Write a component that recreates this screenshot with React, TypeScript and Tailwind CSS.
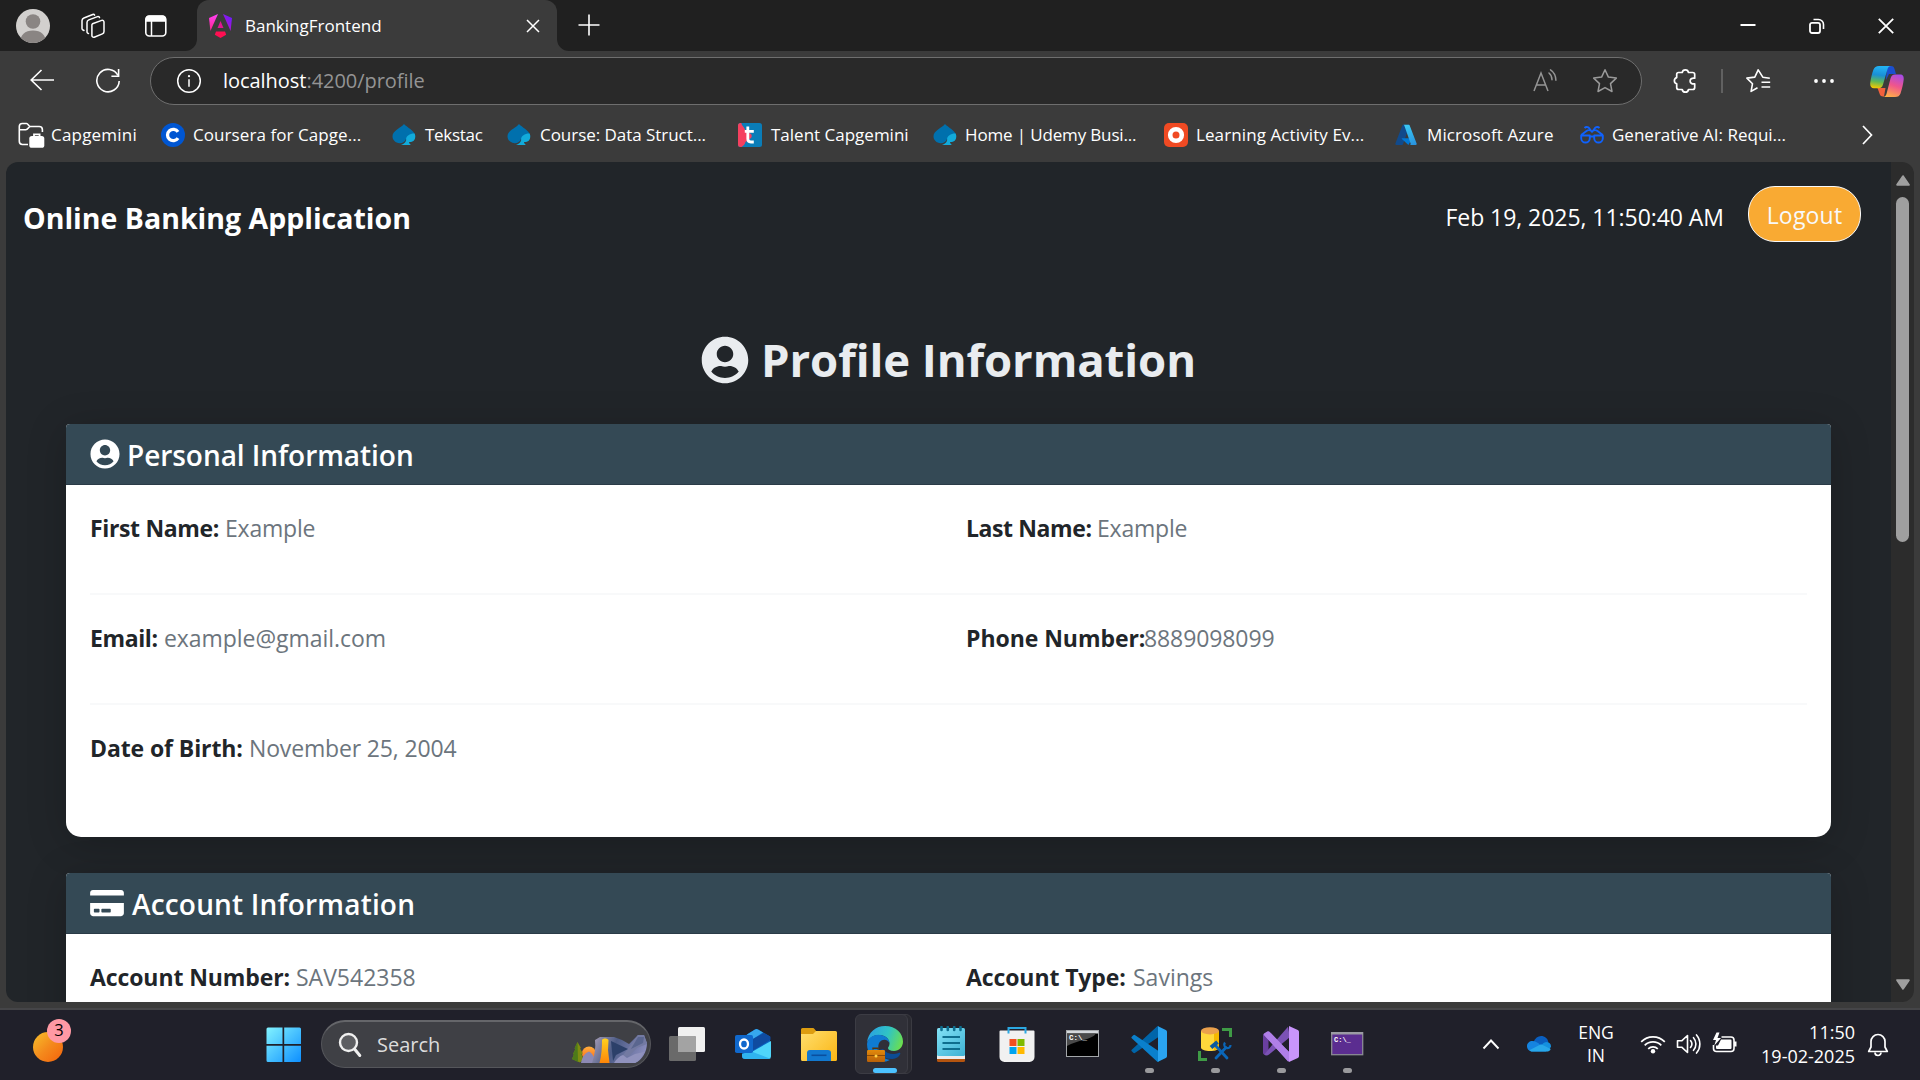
import React from 'react';
import { FaUserCircle, FaCreditCard } from 'react-icons/fa';

type IconProps = { w: number; h: number; className?: string; children: React.ReactNode };

function Icon({ w, h, className = '', children }: IconProps) {
  return (
    <svg width={w} height={h} viewBox={`0 0 ${w} ${h}`} fill="none" className={`block shrink-0 ${className}`}>
      {children}
    </svg>
  );
}

/* ---------- Tab strip ---------- */

function TabStrip() {
  return (
    <div className="flex h-[51px] shrink-0 items-center bg-[#202020]">
      <Icon w={34} h={34} className="ml-4">
        <clipPath id="avatar"><circle cx="17" cy="17" r="17" /></clipPath>
        <g clipPath="url(#avatar)">
          <rect width="34" height="34" fill="#d2d0ce" />
          <circle cx="17" cy="12.5" r="7.3" fill="#8a8583" />
          <path d="M4 34c0-8 5-12.500 13-12.500s13 4.500 13 12.500z" fill="#8a8583" />
        </g>
      </Icon>
      <Icon w={26} h={26} className="ml-[30px]">
        <g stroke="#fff" strokeWidth="1.5" strokeLinejoin="round" strokeLinecap="round">
          <path d="M12.500 10.800l9.200-3.400a1.700 1.700 0 0 1 2.300 1.600v9.500a2.600 2.600 0 0 1-1.600 2.400l-8.200 3.300a1.700 1.700 0 0 1-2.300-1.600V13a2.400 2.400 0 0 1 .6-2.200z" />
          <path d="M8.500 20.500l-.7-.3a1.500 1.500 0 0 1-.8-1.400V9.500a2.800 2.800 0 0 1 1.800-2.600l8.700-3.300a1.500 1.500 0 0 1 2 1" />
          <path d="M4 17.500l-1-.5a1.800 1.800 0 0 1-1-1.600V7.600A3 3 0 0 1 3.900 5l8.800-3.500a1.500 1.500 0 0 1 1.900.7" />
        </g>
      </Icon>
      <Icon w={24} h={24} className="ml-[38px]">
        <rect x="1.800" y="2" width="20" height="20" rx="3.500" stroke="#fff" strokeWidth="1.600" />
        <path d="M1.500 7.800V5a3.500 3.500 0 0 1 3.500-3.500h13.500A3.500 3.500 0 0 1 22 5v2.800z" fill="#fff" />
        <path d="M7.500 7v15" stroke="#fff" strokeWidth="1.500" />
      </Icon>
      <Icon w={12} h={51} className="ml-[17px]">
        <path d="M12 39v12H0a12 12 0 0 0 12-12z" fill="#3b3b3b" />
      </Icon>
      <div className="flex h-full w-[360px] items-center rounded-t-[12px] bg-[#3b3b3b]">
        <Icon w={23} h={24} className="ml-3">
          <defs>
            <linearGradient id="ngp" x1="0" y1="24" x2="23" y2="4" gradientUnits="userSpaceOnUse">
              <stop offset="0" stopColor="#f0060b" />
              <stop offset=".45" stopColor="#e10fb0" />
              <stop offset="1" stopColor="#6b1cff" />
            </linearGradient>
            <linearGradient id="ngl" x1="0" y1="0" x2="0" y2="24" gradientUnits="userSpaceOnUse">
              <stop offset="0" stopColor="#ff41f8" />
              <stop offset="1" stopColor="#ff1a5c" />
            </linearGradient>
          </defs>
          <path d="M9 0L0 4l1.400 13z" fill="url(#ngl)" />
          <path d="M14 0l9 4-1.400 13z" fill="url(#ngp)" />
          <path d="M11.500 7l3 7h-6z" fill="#e21592" />
          <path d="M7 17.500h9l1.200 3.200L11.500 24l-5.700-3.300z" fill="#ff0f52" />
        </Icon>
        <span className="ml-[13px] text-[17px] text-white">BankingFrontend</span>
        <Icon w={14} h={14} className="ml-auto mr-[17px]">
          <path d="M1 1l12 12M13 1L1 13" stroke="#fff" strokeWidth="1.500" />
        </Icon>
      </div>
      <Icon w={12} h={51}>
        <path d="M0 39v12h12A12 12 0 0 1 0 39z" fill="#3b3b3b" />
      </Icon>
      <Icon w={22} h={22} className="mb-[2px] ml-[9px]">
        <path d="M11 0.500v21M0.500 11h21" stroke="#fff" strokeWidth="1.600" />
      </Icon>
      <Icon w={16} h={16} className="mb-px ml-auto mr-[53px]">
        <path d="M.5 8h15" stroke="#fff" strokeWidth="2" />
      </Icon>
      <Icon w={16} h={16} className="mr-[53px]">
        <rect x="1" y="4.800" width="10" height="10.200" rx="2" stroke="#fff" strokeWidth="1.800" />
        <path d="M4.500 1.500h5a5 5 0 0 1 5 5v4.500" stroke="#fff" strokeWidth="1.600" />
      </Icon>
      <Icon w={16} h={16} className="mr-[26px]">
        <path d="M.8.8l14.400 14.400M15.200.8L.8 15.200" stroke="#fff" strokeWidth="1.800" />
      </Icon>
    </div>
  );
}

/* ---------- Address bar ---------- */

function AddressRow() {
  return (
    <div className="flex h-[60px] shrink-0 items-center">
      <Icon w={24} h={22} className="mb-[2px] ml-[30px]">
        <path d="M24 11H1.200M11.500 1L1.200 11l10.300 10" stroke="#fff" strokeWidth="1.600" />
      </Icon>
      <Icon w={26} h={26} className="ml-[41px]">
        <path d="M23 7.500A11.200 11.200 0 1 0 24.200 13" stroke="#fff" strokeWidth="1.600" />
        <path d="M23.600 1v7.200h-7.200" stroke="#fff" strokeWidth="1.600" />
      </Icon>
      <div className="ml-[29px] flex h-[48px] w-[1492px] items-center rounded-full border border-[#6e6e6e] bg-[#292929]">
        <Icon w={26} h={26} className="ml-[25px]">
          <circle cx="13" cy="13" r="11.300" stroke="#fff" strokeWidth="1.500" />
          <path d="M13 11.300v7.500" stroke="#fff" strokeWidth="1.500" />
          <circle cx="13" cy="8.200" r="1.100" fill="#fff" />
        </Icon>
        <span className="ml-[21px] text-[20px] tracking-[-0.04px] text-white">
          localhost<span className="text-[#949494]">:4200/profile</span>
        </span>
        <Icon w={26} h={24} className="mb-px ml-auto mr-[33px]">
          <path d="M1 22L8 4l7 18M3.300 16h9.400" stroke="#959595" strokeWidth="1.500" />
          <path d="M14.500 4c2 1.600 3 3.800 3 6.800M16 .8c3.300 2.200 5.300 5.600 5.400 10.500" stroke="#959595" strokeWidth="1.500" strokeLinecap="round" transform="translate(1.500 0)" />
        </Icon>
        <Icon w={26} h={26} className="mr-[23px]">
          <path d="M13 1.800l3.400 7.300 7.900 1-5.800 5.500 1.500 7.900L13 19.600l-7 3.900 1.500-7.900L1.700 10.100l7.900-1z" stroke="#9a9a9a" strokeWidth="1.500" strokeLinejoin="round" />
        </Icon>
      </div>
      <Icon w={24} h={26} className="ml-[31px]">
        <path d="M5.500 4.500h3.700a3.200 3.200 0 0 1 6.300 0h4.200a2 2 0 0 1 2 2v3.700c-3.200-.4-4.600 1.100-4.600 2.800s1.400 3.200 4.600 2.800v3.700a2 2 0 0 1-2 2h-4.200a3.200 3.200 0 0 1-6.300 0H5.700a2 2 0 0 1-2-2v-3.600a3.300 3.300 0 0 1 0-6.300V6.300a1.800 1.800 0 0 1 1.800-1.800z" stroke="#fff" strokeWidth="1.700" strokeLinejoin="round" />
      </Icon>
      <div className="ml-[24px] h-[24px] w-[2px] bg-[#616161]" />
      <Icon w={26} h={26} className="ml-[22px]">
        <path d="M24.800 10.200l-7-1L13.200 1.800 9.800 9.100l-7.900 1 5.600 5.600-1.400 7.700 6.400-3.600" stroke="#fff" strokeWidth="1.600" strokeLinejoin="round" />
        <path d="M16.500 14.200h8.700M16.500 19h8.700" stroke="#fff" strokeWidth="1.600" />
      </Icon>
      <Icon w={22} h={6} className="ml-[42px]">
        <circle cx="3" cy="3" r="1.900" fill="#fff" />
        <circle cx="11" cy="3" r="1.900" fill="#fff" />
        <circle cx="19" cy="3" r="1.900" fill="#fff" />
      </Icon>
      <Icon w={34} h={31} className="ml-[35px]">
        <defs>
          <linearGradient id="cp1" x1="8" y1="0" x2="5" y2="22" gradientUnits="userSpaceOnUse">
            <stop offset="0" stopColor="#23b4f5" />
            <stop offset=".4" stopColor="#1a8fd6" />
            <stop offset=".7" stopColor="#5fb858" />
            <stop offset="1" stopColor="#f5c800" />
          </linearGradient>
          <linearGradient id="cp2" x1="28" y1="8" x2="20" y2="31" gradientUnits="userSpaceOnUse">
            <stop offset="0" stopColor="#a64be8" />
            <stop offset=".5" stopColor="#f0558c" />
            <stop offset="1" stopColor="#ffae48" />
          </linearGradient>
        </defs>
        <path d="M17 0h4c2.200 0 3 1.200 3.600 3.200L26 8h-7l-3 6z" fill="#1b4fd0" />
        <path d="M7.500 22h8l-1.500 8.500h-1c-2 0-3-1.200-3.500-3z" fill="#f2603c" />
        <path d="M9 0h12c-2 0-3 1.400-3.600 3.400L13 18.500c-.8 2.600-2 3.700-4.300 3.700H4C1 22.200-.2 20 .3 16.500 1 11.500 2 7.500 3.500 3.500 4.500 1.200 6 0 9 0z" fill="url(#cp1)" />
        <path d="M25 31H13c2 0 3-1.400 3.600-3.400L20.500 12.500c.8-2.900 2-4 4.500-4h5c3 0 4 2 3.700 5-.5 4.500-1.700 9.500-3.200 14C29.500 30 28 31 25 31z" fill="url(#cp2)" />
      </Icon>
    </div>
  );
}

/* ---------- Bookmarks ---------- */

function SpadeIcon() {
  return (
    <Icon w={24} h={24}>
      <path d="M12 1c2.500 3 10.500 6.500 11.200 11.500.4 4-3.200 5.500-6.200 4.500l-3-1c-.8 2.700-3.300 4.300-6.300 4.200C3.500 20 .5 17 .5 13.200.5 7.500 9 5 12 1z" fill="#0070ad" />
      <path d="M22.600 10.500c1.800 4.500-.2 8.800-5.600 8.600.2 1.300 1 2.300 2 3H9c2.300-.7 4.500-2 5.200-5-.8-3.700 3.300-6.800 8.400-6.600z" fill="#12abdb" />
    </Icon>
  );
}

function FolderIcon() {
  return (
    <Icon w={27} h={27}>
      <path d="M10 22.500H4.500A3.200 3.200 0 0 1 1.300 19.300V4.500a3 3 0 0 1 3-3h4.200c1.600 0 2.200 3 3.800 3h8.900a3.200 3.200 0 0 1 3.200 3.200V10M1.300 7.800h6.500c2.400 0 2.600-3.300 4.700-3.300" stroke="#fff" strokeWidth="1.600" strokeLinejoin="round" />
      <rect x="11.300" y="14" width="15" height="11.800" rx="2.600" fill="#fff" />
      <path d="M16 14.500v-2.200h5.600v2.200" stroke="#fff" strokeWidth="1.800" />
    </Icon>
  );
}

function CourseraIcon() {
  return (
    <Icon w={24} h={24}>
      <circle cx="12" cy="12" r="12" fill="#0056d2" />
      <path d="M17 8.900a5.700 5.700 0 1 0 0 6.200" stroke="#fff" strokeWidth="3.300" />
    </Icon>
  );
}

function TalentIcon() {
  return (
    <Icon w={24} h={24}>
      <rect width="24" height="24" rx="2.500" fill="#0a7db8" />
      <path d="M2.500 0h.8c.9 3.500 3.300 4.200 4 7.500L13 11c1 1 1 3 0 4l-5.500 4c-.8 2.600-2 3.600-4 5h-1A2.500 2.500 0 0 1 0 21.500v-19A2.500 2.500 0 0 1 2.500 0z" fill="#f5405f" />
      <path d="M9.800 3.500v12.300c0 2.300 1.200 3.200 3 3.200h3M6.800 8.300h9" stroke="#fff" strokeWidth="2.800" />
    </Icon>
  );
}

function LearningIcon() {
  return (
    <Icon w={24} h={24}>
      <rect width="24" height="24" rx="5" fill="#f04a23" />
      <circle cx="12" cy="12" r="5.800" stroke="#fff" strokeWidth="4.600" />
      <path d="M12 9.300v5.400M9.300 12h5.400" stroke="#f04a23" strokeWidth="2" />
    </Icon>
  );
}

function AzureIcon() {
  return (
    <Icon w={24} h={24}>
      <defs>
        <linearGradient id="az" x1="10" y1="2" x2="20" y2="22" gradientUnits="userSpaceOnUse">
          <stop offset="0" stopColor="#3ccbf4" />
          <stop offset="1" stopColor="#2892df" />
        </linearGradient>
      </defs>
      <path d="M8.300 1.800h6.400L8 21.300a1.200 1.200 0 0 1-1 .7H1.400c-.8 0-1.300-.6-1-1.400L7.300 2.500a1 1 0 0 1 1-.7z" fill="#114a8b" />
      <path d="M17.300 15.200H7.200c-.5 0-.7.5-.3.8l6.500 6z" fill="#0078d4" />
      <path d="M14.700 2.500a1 1 0 0 0-1-.7H8.300a1 1 0 0 1 1 .7l6.400 18.300c.2.600-.2 1.200-1 1.200h6c.8 0 1.200-.6 1-1.200z" fill="url(#az)" />
    </Icon>
  );
}

function GlassesIcon() {
  return (
    <Icon w={24} h={24}>
      <g stroke="#0f62fe" strokeWidth="1.900" strokeLinejoin="round">
        <path d="M1.200 12.500h8.600v2.700a4.300 4.300 0 0 1-8.600 0zM14.200 12.500h8.600v2.700a4.300 4.300 0 0 1-8.600 0zM9.800 13.500h4.400M1.200 12l5.300-4c2-1.500 4-.8 5.500.6 1.500-1.400 3.500-2.100 5.500-.6l5.300 4M4.500 5c1.500-1.500 3-1.200 4-.4s1.800 2.600 3.500 4.200c1.700-1.600 2.500-3.400 3.500-4.200s2.500-1.100 4 .4" />
      </g>
    </Icon>
  );
}

const bookmarks = [
  { label: 'Capgemini', width: 'w-[143px]', icon: <FolderIcon />, text: 'ml-[6px] tracking-[0.2px]' },
  { label: 'Coursera for Capge...', width: 'w-[231px]', icon: <CourseraIcon />, text: 'ml-2 tracking-[0.07px]' },
  { label: 'Tekstac', width: 'w-[115px]', icon: <SpadeIcon />, text: 'ml-[9px] tracking-[-0.3px]' },
  { label: 'Course: Data Struct...', width: 'w-[231px]', icon: <SpadeIcon />, text: 'ml-[9px] tracking-[-0.04px]' },
  { label: 'Talent Capgemini', width: 'w-[195px]', icon: <TalentIcon />, text: 'ml-[9px]' },
  { label: 'Home | Udemy Busi...', width: 'w-[231px]', icon: <SpadeIcon />, text: 'ml-2 tracking-[-0.15px]' },
  { label: 'Learning Activity Ev...', width: 'w-[231px]', icon: <LearningIcon />, text: 'ml-2 tracking-[0.1px]' },
  { label: 'Microsoft Azure', width: 'w-[185px]', icon: <AzureIcon />, text: 'ml-2 tracking-[0.1px]' },
  { label: 'Generative AI: Requi...', width: 'w-[240px]', icon: <GlassesIcon />, text: 'ml-2' },
];

function BookmarksRow() {
  return (
    <div className="flex h-[51px] shrink-0 items-center pb-[3px] pl-[18px]">
      {bookmarks.map((b) => (
        <div key={b.label} className={`flex shrink-0 items-center ${b.width}`}>
          {b.icon}
          <span className={`whitespace-nowrap text-[17px] leading-6 text-white ${b.text}`}>{b.label}</span>
        </div>
      ))}
      <Icon w={12} h={20} className="ml-auto mr-[47px]">
        <path d="M2 1l8.500 9L2 19" stroke="#fff" strokeWidth="1.700" />
      </Icon>
    </div>
  );
}

/* ---------- Banking page ---------- */

type FieldProps = { label: string; value: string; labelClass: string; valueClass?: string };

function Field({ label, value, labelClass, valueClass = '' }: FieldProps) {
  return (
    <div className="flex text-[23px] leading-9">
      <span className={`shrink-0 whitespace-nowrap font-bold text-[#212529] ${labelClass}`}>{label}</span>
      <span className={`whitespace-nowrap text-[#6c757d] ${valueClass}`}>{value}</span>
    </div>
  );
}

function FieldRow({ children, divider = true }: { children: React.ReactNode; divider?: boolean }) {
  return (
    <div className={`grid h-[110px] grid-cols-[876px_1fr] pt-[25px] ${divider ? 'border-b-2 border-[#f8f9fa]' : ''}`}>
      {children}
    </div>
  );
}

type CardProps = { icon: React.ReactNode; title: string; titleClass: string; className: string; children: React.ReactNode };

function Card({ icon, title, titleClass, className, children }: CardProps) {
  return (
    <section className={`w-[1765px] rounded-t-[4px] rounded-b-[15px] bg-white shadow-[0_6px_40px_rgba(0,0,0,0.2)] ${className}`}>
      <h2 className="flex h-[61px] items-center rounded-t-[4px] border-b border-[#2a3b47] bg-[#344955] px-6 text-[28px] font-semibold text-white">
        {icon}
        <span className={`mt-[2px] leading-9 ${titleClass}`}>{title}</span>
      </h2>
      <div className="px-6">{children}</div>
    </section>
  );
}

function BankingPage() {
  return (
    <div className="h-full w-[1885px] overflow-hidden bg-[#212529]">
      <header className="flex h-[108px] pl-[17px] pr-[30px]">
        <h1 className="mt-[36px] text-[28.500px] font-bold leading-[40px] text-white">Online Banking Application</h1>
        <span className="ml-auto mt-[37px] text-[23px] leading-9 tracking-[-0.05px] text-white">Feb 19, 2025, 11:50:40 AM</span>
        <button className="ml-[24px] mt-6 h-[56px] w-[113px] rounded-[27px] border border-[#f8f9fa] bg-[#f9aa33] pt-[2px] text-[23px] leading-9 tracking-[0.2px] text-[#f8f9fa]">
          Logout
        </button>
      </header>
      <div className="flex flex-col items-start pl-[60px]">
        <div className="flex w-[1765px] items-center justify-center pt-[60px] text-[#e9ecef]">
          <FaUserCircle className="size-[48px] shrink-0" />
          <span className="-mt-px ml-[12px] mb-px text-[45.500px] font-bold leading-[60px] tracking-[-0.1px]">Profile Information</span>
        </div>
        <Card
          className="mt-[34px]"
          title="Personal Information"
          titleClass="ml-[7px] tracking-[-0.05px]"
          icon={<FaUserCircle className="size-[30px]" />}
        >
          <FieldRow>
            <Field label="First Name:" value="Example" labelClass="w-[135px] tracking-[-0.35px]" valueClass="tracking-[-0.2px]" />
            <Field label="Last Name:" value="Example" labelClass="w-[131px] tracking-[-0.4px]" valueClass="tracking-[-0.2px]" />
          </FieldRow>
          <FieldRow>
            <Field label="Email:" value="example@gmail.com" labelClass="w-[74px] tracking-[-0.4px]" valueClass="tracking-[-0.05px]" />
            <Field label="Phone Number:" value="8889098099" labelClass="w-[178px] tracking-[-0.05px]" valueClass="tracking-[-0.1px]" />
          </FieldRow>
          <FieldRow divider={false}>
            <Field label="Date of Birth:" value="November 25, 2004" labelClass="w-[159px] tracking-[-0.1px]" valueClass="tracking-[-0.15px]" />
          </FieldRow>
          <div className="h-[22px]" />
        </Card>
        <Card
          className="mt-[36px]"
          title="Account Information"
          titleClass="ml-[8px] tracking-[0.18px]"
          icon={<FaCreditCard className="h-[30px] w-[34px]" />}
        >
          <FieldRow>
            <Field label="Account Number:" value="SAV542358" labelClass="w-[206px] tracking-[-0.1px]" />
            <Field label="Account Type:" value="Savings" labelClass="w-[167px] tracking-[-0.1px]" />
          </FieldRow>
        </Card>
      </div>
    </div>
  );
}

function Scrollbar() {
  return (
    <div className="flex h-full w-[23px] flex-col items-center bg-[#2c2c2c]">
      <Icon w={14} h={11} className="mt-[13px]">
        <path d="M7 1.200L12.800 9.800H1.200z" fill="#9f9f9f" stroke="#9f9f9f" strokeWidth="2" strokeLinejoin="round" />
      </Icon>
      <div className="mt-[11px] h-[345px] w-[13px] rounded-full bg-[#9f9f9f]" />
      <Icon w={14} h={11} className="mb-[12px] mt-auto">
        <path d="M7 9.800L1.200 1.200h11.600z" fill="#9f9f9f" stroke="#9f9f9f" strokeWidth="2" strokeLinejoin="round" />
      </Icon>
    </div>
  );
}

/* ---------- Taskbar ---------- */

function TaskViewIcon() {
  return (
    <Icon w={36} h={36}>
      <rect x="9" y="1" width="27" height="25" rx="1.500" fill="#f0f0f0" />
      <rect x="0" y="10" width="27" height="25" rx="1.500" fill="#6a6a6a" />
      <path d="M9 10h16.500A1.500 1.500 0 0 1 27 11.500V26H9z" fill="#a3a3a3" />
    </Icon>
  );
}

function OutlookIcon() {
  return (
    <Icon w={36} h={36}>
      <path d="M8 11L20 3.500a3 3 0 0 1 3 0L35 10.500V30a3 3 0 0 1-3 3H10a3 3 0 0 1-3-3z" fill="#0a63c2" />
      <path d="M12 8.500L20 3.500a3 3 0 0 1 3 0l5 3L12 17z" fill="#36a8ee" />
      <path d="M14 15l15-8 6.500 3.700v3L17 25z" fill="#0f4ba0" />
      <path d="M36 15L14 27.500V30a3 3 0 0 0 3 3h16a3 3 0 0 0 3-3z" fill="#4fd5fa" />
      <path d="M7 28l8-3 21 8H10a3 3 0 0 1-3-3z" fill="#2fb4f0" />
      <rect x="0" y="9" width="18" height="18" rx="1.800" fill="#1068cc" />
      <ellipse cx="9" cy="18" rx="4" ry="4.500" stroke="#fff" strokeWidth="2.300" />
    </Icon>
  );
}

function ExplorerIcon() {
  return (
    <Icon w={36} h={36}>
      <defs>
        <linearGradient id="fold" x1="0" y1="5" x2="30" y2="35" gradientUnits="userSpaceOnUse">
          <stop offset="0" stopColor="#ffdf6e" />
          <stop offset="1" stopColor="#fbb91c" />
        </linearGradient>
      </defs>
      <path d="M0 3.500A1.500 1.500 0 0 1 1.500 2h10c1 0 1.600.4 2.200 1.200L15.500 5.500V12H0z" fill="#dd9d10" />
      <path d="M0 8h12l3-3h19.500A1.500 1.500 0 0 1 36 6.500V33.500A1.500 1.500 0 0 1 34.500 35h-33A1.500 1.500 0 0 1 0 33.500z" fill="url(#fold)" />
      <path d="M6 27a3 3 0 0 1 3-3h18a3 3 0 0 1 3 3v8H6z" fill="#1278cf" />
      <path d="M10.500 29.300h15" stroke="#0a4f9e" strokeWidth="1.600" />
    </Icon>
  );
}

function EdgeIcon() {
  return (
    <Icon w={36} h={36}>
      <defs>
        <linearGradient id="edgeTop" x1="2" y1="8" x2="35" y2="20" gradientUnits="userSpaceOnUse">
          <stop offset="0" stopColor="#2aa3e0" />
          <stop offset=".5" stopColor="#30c4c4" />
          <stop offset="1" stopColor="#6ee04a" />
        </linearGradient>
        <linearGradient id="case" x1="0" y1="24" x2="0" y2="36" gradientUnits="userSpaceOnUse">
          <stop offset="0" stopColor="#e28a0c" />
          <stop offset="1" stopColor="#b86008" />
        </linearGradient>
      </defs>
      <path d="M0 17C1 6 9 0 18 0c11 0 18 7.500 18 15.500C36 21 32 25 27 25c-4 0-6-1.400-6-3 0-1 1.500-1.700 1.500-4.500C22.500 13 18 9 12.500 9 6 9 1.500 12.500 0 17z" fill="url(#edgeTop)" />
      <path d="M0 18c.8-5.500 5.500-9.200 11.500-9.200 6 0 11 3.700 11 8.700-.7-2-2.700-3.700-5.200-3.700-3.500 0-6 3-6 7.200 0 6.500 4 11.500 11.500 13-1.500.8-3.200 1.500-5 1.500C8 36 0 28.500 0 18z" fill="#0f7bd2" />
      <path d="M12.500 24c1 6 6 9 12 9 3.200 0 6.500-1 8.500-4.500 1-1.500-.3-2-1.500-1.500-5.500 2.200-12.500.5-15.500-4z" fill="#0c4c94" />
      <path d="M6 23.500v-1.300h5v1.300" stroke="#5a3306" strokeWidth="1.400" />
      <rect x="0" y="24" width="18" height="12" rx="1.200" fill="url(#case)" />
      <path d="M0 29.500h18" stroke="#8a4a05" strokeWidth="1" />
      <circle cx="9" cy="30" r="1.500" fill="#ffd24a" />
    </Icon>
  );
}

function NotepadIcon() {
  return (
    <Icon w={36} h={36}>
      <defs>
        <linearGradient id="note" x1="4" y1="2" x2="30" y2="32" gradientUnits="userSpaceOnUse">
          <stop offset="0" stopColor="#83e2f6" />
          <stop offset="1" stopColor="#3db1d3" />
        </linearGradient>
      </defs>
      <rect x="4" y="28" width="28" height="8" rx="1.500" fill="#b4540f" />
      <rect x="4" y="26" width="28" height="7" fill="#ececec" />
      <rect x="4" y="2" width="28" height="28" rx="1.500" fill="url(#note)" />
      <path d="M9.500 11h17.500M9.500 17h17.500M9.500 23h17.500" stroke="#0e6e8e" strokeWidth="1.800" />
      <path d="M8.500 1v3M14.800 1v3M21.200 1v3M27.500 1v3" stroke="#0e6e8e" strokeWidth="2.600" strokeLinecap="round" />
    </Icon>
  );
}

function StoreIcon() {
  return (
    <Icon w={36} h={36}>
      <path d="M0.500 5.500A1 1 0 0 1 1.500 4.500h33A1 1 0 0 1 35.500 5.500V31a5 5 0 0 1-5 5h-25a5 5 0 0 1-5-5z" fill="#f1f1f1" />
      <path d="M9.500 7.500V2h17v5.500" stroke="#2ba8e2" strokeWidth="2" />
      <rect x="10.500" y="13" width="7" height="7" fill="#f25022" />
      <rect x="18.500" y="13" width="7" height="7" fill="#7fba00" />
      <rect x="10.500" y="21" width="7" height="7" fill="#00a4ef" />
      <rect x="18.500" y="21" width="7" height="7" fill="#ffb900" />
    </Icon>
  );
}

function CmdIcon() {
  return (
    <Icon w={36} h={36}>
      <rect x="1.500" y="4.500" width="32" height="26" fill="#000" stroke="#a4a7aa" />
      <path d="M2 5h31v2.500H2z" fill="#d5d8dc" />
      <path d="M2 7.500h29C27 14 12 14 2 20z" fill="#4a4a4a" />
      <text x="4" y="14" fill="#fff" fontSize="7.500" fontFamily="'Liberation Mono', monospace" fontWeight="700">C:\_</text>
    </Icon>
  );
}

function VsCodeIcon() {
  return (
    <Icon w={36} h={36}>
      <path d="M1 23.500L26 .6c.6-.5 1-.6 1.500-.4V11L4.200 26.800a1.500 1.500 0 0 1-1.900-.1L.8 25.300a1.200 1.200 0 0 1 .2-1.800z" fill="#0065a9" />
      <path d="M1 12.500L26 35.400c.6.500 1 .6 1.500.4V25L4.200 9.200a1.500 1.500 0 0 0-1.900.1L.8 10.700a1.200 1.200 0 0 0 .2 1.800z" fill="#0a80cc" />
      <path d="M27 .3L34.800 4A2 2 0 0 1 36 5.800V30.200a2 2 0 0 1-1.200 1.800L27 35.700z" fill="#2aa4f0" />
    </Icon>
  );
}

function SsmsIcon() {
  return (
    <Icon w={36} h={36}>
      <path d="M4 5v16.500C4 23.500 8 25 13 25s9-1.500 9-3.500V5z" fill="#ffd83b" />
      <path d="M17 5v19.600c3-.5 5-1.600 5-3.100V5z" fill="#f5b800" />
      <ellipse cx="13" cy="4.800" rx="9" ry="3.600" fill="#eaa04c" />
      <path d="M25 3.500h8.500V11M10 33.500H2.500V25" stroke="#3f9b46" strokeWidth="3" />
      <path d="M19 32l10-10.500" stroke="#0a66b8" strokeWidth="2.800" strokeLinecap="round" />
      <path d="M28 16.500c-1.500 2-.5 5 1.500 5.500s4-.5 4-3" stroke="#0a66b8" strokeWidth="2.200" />
      <path d="M18.500 19.500L30 32" stroke="#0a66b8" strokeWidth="2.800" strokeLinecap="round" />
      <path d="M14 21.500l6.500-5.500" stroke="#0a5a9e" strokeWidth="4" />
    </Icon>
  );
}

function VisualStudioIcon() {
  return (
    <Icon w={36} h={36}>
      <path d="M0 8l5.500 5v11L1.300 28.500A1.500 1.500 0 0 1 0 27z" fill="#6a3fa0" />
      <path d="M1 28.500L25 .8 27 11 6 28.500c-1.500 1.200-3.500 1.200-5 0z" fill="#7b52b5" />
      <path d="M1 7.500L4.200 5.500a2 2 0 0 1 2.400.2L27 27l-2 8.500L1.500 9.500a1.300 1.300 0 0 1-.5-2z" fill="#b07fe8" />
      <path d="M26 0l8.800 4A2 2 0 0 1 36 5.800V30.200a2 2 0 0 1-1.200 1.800L26 36z" fill="#c995fb" />
      <path d="M5 5.500L26 26v10L1 9z" fill="#b07fe8" />
    </Icon>
  );
}

function TerminalIcon() {
  return (
    <Icon w={36} h={36}>
      <rect x="2.700" y="6.700" width="31" height="22" fill="#5b2d90" stroke="#8b8b93" strokeWidth="1.300" />
      <path d="M2 6h32v2.500H2z" fill="#9b9ba3" />
      <text x="5" y="16" fill="#fff" fontSize="7" fontFamily="'Liberation Mono', monospace" fontWeight="700">C:\_</text>
    </Icon>
  );
}

function Landscape() {
  return (
    <Icon w={76} h={30}>
      <defs>
        <linearGradient id="sun" x1="0" y1="12" x2="0" y2="26" gradientUnits="userSpaceOnUse">
          <stop offset="0" stopColor="#ffb13d" />
          <stop offset="1" stopColor="#ff6a1a" />
        </linearGradient>
        <linearGradient id="fall" x1="0" y1="4" x2="0" y2="29" gradientUnits="userSpaceOnUse">
          <stop offset="0" stopColor="#ffd21f" />
          <stop offset="1" stopColor="#ff8608" />
        </linearGradient>
        <linearGradient id="rock" x1="22" y1="4" x2="70" y2="28" gradientUnits="userSpaceOnUse">
          <stop offset="0" stopColor="#a39bb5" />
          <stop offset=".4" stopColor="#4d5c86" />
          <stop offset="1" stopColor="#8d8fc0" />
        </linearGradient>
      </defs>
      <circle cx="17" cy="19.500" r="7" fill="url(#sun)" />
      <path d="M5.500 8L9 14l-1 .5 3 5-1.500.5 2 5.500L8 28.500 0 25l2-4.500-1-.5 2.500-5-1-.5z" fill="#7e8c12" />
      <path d="M5.500 8L6 28 0 25l2-4.500-1-.5 2.500-5-1-.5z" fill="#4d7a1a" />
      <path d="M9 29c1-6 4-10 8-11.500 2 1 6 5 7 11.500z" fill="#8d8ab4" />
      <path d="M20 29c2.500-8 4-15 3-23l5-3h14l8 3 7 4L66 1h6l3 8c0 9-5 17-12 20z" fill="url(#rock)" />
      <path d="M57 13L66 1l6 0 3 9-10 4-8 8-8 2z" fill="#737aa2" />
      <path d="M66 3l-7 12 12-6 1-6z" fill="#5a668f" />
      <path d="M42 29c2-4 6-7 9-8l4 3 8-4 9-2c-2 5-5 9-9 11z" fill="#9092bd" />
      <path d="M39 7l17 8-12 6-3 6z" fill="#2c4069" />
      <path d="M30 6c1-2 5-2 6.500 0L36 16l1.500 13h-10c2-8 2.500-15 2.500-23z" fill="url(#fall)" />
    </Icon>
  );
}

const apps = [
  { name: 'taskview', icon: <TaskViewIcon />, state: '' },
  { name: 'outlook', icon: <OutlookIcon />, state: '' },
  { name: 'explorer', icon: <ExplorerIcon />, state: '' },
  { name: 'edge', icon: <EdgeIcon />, state: 'active' },
  { name: 'notepad', icon: <NotepadIcon />, state: '' },
  { name: 'store', icon: <StoreIcon />, state: '' },
  { name: 'cmd', icon: <CmdIcon />, state: '' },
  { name: 'vscode', icon: <VsCodeIcon />, state: 'open' },
  { name: 'ssms', icon: <SsmsIcon />, state: 'open' },
  { name: 'vs', icon: <VisualStudioIcon />, state: 'open' },
  { name: 'terminal', icon: <TerminalIcon />, state: 'open' },
];

function AppButton({ icon, state }: { icon: React.ReactNode; state: string }) {
  return (
    <div className="relative flex h-full w-[66px] items-center justify-center pb-[2px]">
      {state === 'active' && (
        <>
          <div className="absolute left-[20px] top-[4px] h-[60px] w-[40px] rounded-[6px] border border-[#3a3a41] bg-[#2a2a31]" />
          <div className="absolute left-[3px] top-[4px] h-[60px] w-[53px] rounded-[6px] border border-[#3c3c44] bg-[#303038]" />
          <div className="absolute bottom-[7px] left-[21px] h-[5px] w-[24px] rounded-full bg-[#4cc2ff]" />
        </>
      )}
      {state === 'open' && <div className="absolute bottom-[7px] left-[29px] h-[5px] w-[9px] rounded-full bg-[#9a9a9d]" />}
      <div className="relative">{icon}</div>
    </div>
  );
}

function Taskbar() {
  return (
    <div className="flex h-[70px] shrink-0 items-center bg-[#20202a]">
      <div className="relative ml-[33px] mt-[3px] h-[30px] w-[30px]">
        <div className="size-[30px] rounded-full bg-linear-to-br from-[#f5c02c] via-[#f48a1c] to-[#f2600a]" />
        <span className="absolute -top-[13px] left-[14px] flex size-6 items-center justify-center rounded-full bg-[#ff99a4] text-[16.500px] leading-none text-black">3</span>
      </div>
      <Icon w={36} h={36} className="ml-[203px]">
        <defs>
          <linearGradient id="win" x1="0" y1="0" x2="36" y2="36" gradientUnits="userSpaceOnUse">
            <stop offset="0" stopColor="#84f5ff" />
            <stop offset="1" stopColor="#0a8cff" />
          </linearGradient>
        </defs>
        <path d="M2 .500h14.500v16.500H.500V2A1.500 1.500 0 0 1 2 .500zM18.200.500H33.500A1.500 1.500 0 0 1 35 2V17H18.200zM.500 18.800h16V35H2A1.500 1.500 0 0 1 .500 33.500zM18.200 18.800H35v14.700a1.500 1.500 0 0 1-1.500 1.500H18.200z" fill="url(#win)" />
      </Icon>
      <div className="ml-[19px] mb-[2px] flex h-[48px] w-[330px] items-center rounded-full border border-t-2 border-[#55565b] border-t-[#65666a] bg-[#3f4045] pr-[2px]">
        <Icon w={24} h={26} className="ml-[16px]">
          <circle cx="10.500" cy="10.500" r="8.500" stroke="#f0f0f0" strokeWidth="2.400" fill="#5d5e62" />
          <path d="M16.500 17l5.300 6.500" stroke="#f0f0f0" strokeWidth="3" strokeLinecap="round" />
        </Icon>
        <span className="ml-[15px] text-[20px] leading-8 text-[#dcdcdc]">Search</span>
        <div className="ml-auto mt-[9px]">
          <Landscape />
        </div>
      </div>
      <div className="ml-[3px] flex h-full">
        {apps.map((a) => (
          <AppButton key={a.name} icon={a.icon} state={a.state} />
        ))}
      </div>
      <Icon w={18} h={12} className="ml-auto mt-[-3px]">
        <path d="M1.500 10.500L9 2.500l7.500 8" stroke="#fff" strokeWidth="1.900" />
      </Icon>
      <Icon w={24} h={18} className="ml-[27px] mt-[-2px]">
        <path d="M6.500 7C8 3 11 1 14 1c4 0 6.500 2.500 7.300 6l-7 6z" fill="#0a5fc0" />
        <path d="M5.500 16.500C2.400 16.500 0 14 0 11.200 0 8 2.500 6 5.500 6c2.500 0 4 1 6 2.300l8 8.200z" fill="#1584e0" />
        <path d="M14 11c1.500-2.500 3.500-4 6-4 2.500 0 4 2.200 4 4.500l-2 4z" fill="#1490df" />
        <path d="M2.300 15.300L12.500 10c1.200-.6 2-.6 3.200-.1l8 4c-.7 1.700-2.200 2.700-4.200 2.700h-14c-1.200 0-2.300-.5-3.200-1.300z" fill="#28a8ea" />
      </Icon>
      <div className="ml-[24px] mt-[-2px] w-[42px] text-center text-[17.500px] leading-[23px] text-white">
        <div>ENG</div>
        <div>IN</div>
      </div>
      <Icon w={26} h={20} className="ml-[23px] mt-[-3px]">
        <g stroke="#fff" strokeWidth="1.700">
          <path d="M1.200 7.800a16.500 16.500 0 0 1 23.600 0" />
          <path d="M4.700 11.300a11.700 11.700 0 0 1 16.600 0" />
          <path d="M8.200 14.800a6.800 6.800 0 0 1 9.600 0" />
        </g>
        <circle cx="13" cy="17.300" r="2.200" fill="#fff" />
      </Icon>
      <Icon w={26} h={22} className="ml-[10px] mt-[-2px]">
        <g stroke="#fff" strokeWidth="1.600" strokeLinejoin="round">
          <path d="M1.500 7.800h4.200L11.500 2.500v17L5.700 14.200H1.500z" />
          <path d="M14.500 7.500a5.500 5.500 0 0 1 0 7M17.500 4.700a9.500 9.500 0 0 1 0 12.600M20.500 1.900a14 14 0 0 1 0 18.200" strokeLinecap="round" />
        </g>
      </Icon>
      <Icon w={26} h={22} className="ml-[10px] mt-[-4px]">
        <path d="M9.500 5H19a3 3 0 0 1 3 3v8.500a3 3 0 0 1-3 3H4.500a3 3 0 0 1-3-3V13" stroke="#fff" strokeWidth="1.600" />
        <path d="M9 7.500h9.500a1 1 0 0 1 1 1V16a1 1 0 0 1-1 1H5a1 1 0 0 1-1-1v-2.500h2z" fill="#fff" />
        <path d="M22 9.500h2.500v5H22z" fill="#fff" />
        <path d="M4.500.5L1 8h3L2.300 13.500 9 6H5.500L7.500.5z" fill="#fff" />
      </Icon>
      <div className="ml-[17px] mt-[-3px] w-[100px] text-right text-[18px] leading-6 text-white">
        <div>11:50</div>
        <div>19-02-2025</div>
      </div>
      <Icon w={22} h={24} className="ml-[12px] mr-[31px]">
        <path d="M11 1.500a7 7 0 0 1 7 7v5.500l2.300 4.500H1.700L4 14V8.500a7 7 0 0 1 7-7z" stroke="#fff" strokeWidth="1.700" strokeLinejoin="round" />
        <path d="M8 19.500a3 3 0 0 0 6 0" stroke="#fff" strokeWidth="1.700" />
      </Icon>
    </div>
  );
}

export default function App() {
  return (
    <div className="flex h-[1080px] w-[1920px] flex-col overflow-hidden bg-[#3b3b3b] font-['Open_Sans','Noto_Sans',sans-serif]">
      <TabStrip />
      <AddressRow />
      <BookmarksRow />
      <div className="mx-[6px] flex h-[840px] shrink-0 overflow-hidden rounded-[12px]">
        <BankingPage />
        <Scrollbar />
      </div>
      <div className="mt-[6px] h-[2px] shrink-0 bg-[#454548]" />
      <Taskbar />
    </div>
  );
}
